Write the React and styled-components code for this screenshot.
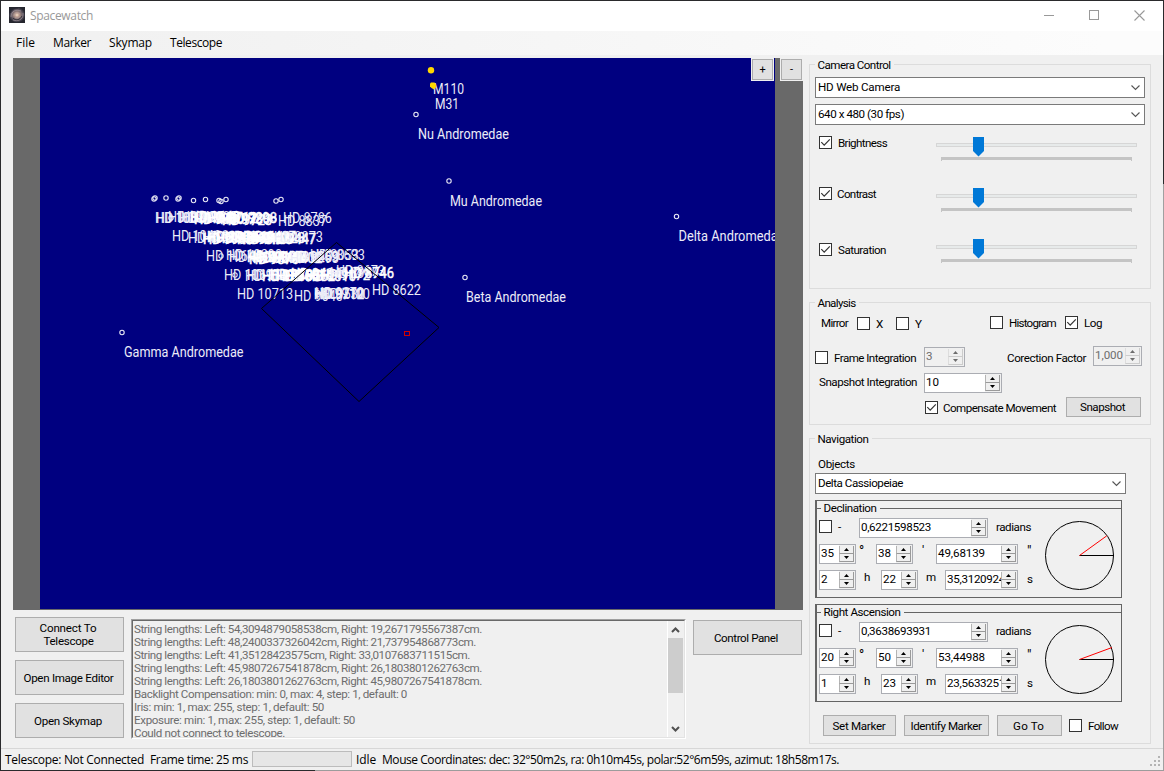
import React from 'react';
import styled, { createGlobalStyle } from 'styled-components';

const SANS = 'Roboto, "Liberation Sans", sans-serif';
const UI = '"Open Sans", "Noto Sans", sans-serif';

const GlobalStyle = createGlobalStyle`
  * { box-sizing: border-box; }
  body { margin: 0; overflow: hidden; background: #f0f0f0; }
`;

/* ---------- text with a set advance width ---------- */
const ctx = document.createElement('canvas').getContext('2d');
function tracking(text, width, font) {
  if (!width) return 0;
  ctx.font = font;
  return (width - ctx.measureText(text).width) / text.length;
}

const TextBox = styled.span`
  display: block;
  flex: none;
  white-space: pre;
  font-family: ${(p) => (p.$ui ? UI : SANS)};
  font-size: ${(p) => p.$size}px;
  line-height: ${(p) => p.$lh || 14}px;
  color: ${(p) => p.$color || '#000'};
  margin: ${(p) => p.$m || '0'};
`;

function Text({ children, w, ui, size = ui ? 12 : 11.6, lh, color, m }) {
  const ls = tracking(children, w, `${size}px ${ui ? UI : SANS}`);
  return (
    <TextBox $ui={ui} $size={size} $lh={lh} $color={color} $m={m} style={{ letterSpacing: `${ls}px` }}>
      {children}
    </TextBox>
  );
}

/* ---------- window chrome ---------- */
const Window = styled.div`
  width: 1164px;
  height: 771px;
  display: flex;
  flex-direction: column;
  border: 1px solid transparent;
  background:
    linear-gradient(#f0f0f0, #f0f0f0) padding-box,
    linear-gradient(90deg, #2a2a2c 315px, #9c9c9c 315px) bottom / 100% 1px no-repeat border-box,
    linear-gradient(#2a2a2c 184px, #a0a0a0 184px) right / 1px 100% no-repeat border-box,
    linear-gradient(#2a2a2c, #2a2a2c) border-box;
`;
const TitleBar = styled.header`
  height: 30px;
  flex: none;
  background: #fff;
  display: flex;
  padding: 6px 0 0 8px;
`;
const Caption = styled.div`
  margin-left: auto;
  margin-right: 18px;
  display: flex;
  gap: 35px;
  padding-top: 3px;
  svg { display: block; }
`;
const MenuBar = styled.nav`
  height: 24px;
  flex: none;
  background: linear-gradient(90deg, #f0f0f0, #fcfcfc 95%);
  display: flex;
  padding: 3px 0 0 15px;
`;
const Main = styled.main`
  flex: 1;
  display: flex;
  min-height: 0;
  padding-left: 12px;
`;
const Left = styled.section`
  width: 790px;
  flex: none;
  display: flex;
  flex-direction: column;
`;
const Right = styled.section`
  margin-left: 6px;
  width: 342px;
  flex: none;
`;

/* ---------- controls ---------- */
const Button = styled.div`
  width: ${(p) => p.$w}px;
  height: ${(p) => p.$h}px;
  flex: none;
  background: #e1e1e1;
  border: 1px solid #adadad;
  display: flex;
  flex-direction: column;
  align-items: center;
  justify-content: center;
  margin: ${(p) => p.$m || '0'};
`;
const Row = styled.div`
  display: flex;
  align-items: flex-start;
  height: ${(p) => p.$h}px;
  padding: ${(p) => p.$p || '0'};
`;
const Group = styled.div`
  width: 342px;
  height: ${(p) => p.$h}px;
  border: 1px solid #dcdcdc;
  margin-top: ${(p) => p.$mt}px;
`;
const Legend = styled.div`
  height: 14px;
  margin: ${(p) => p.$m || '-7px 0 -1px 5px'};
  padding: 0 3px 0 2.5px;
  width: max-content;
  background: #f0f0f0;
`;
const Box = styled.span`
  width: 13px;
  height: 13px;
  flex: none;
  border: 1px solid #333;
  background: #fff;
  margin: ${(p) => p.$m || '0'};
  svg { display: block; }
`;
function Check({ on, m }) {
  return (
    <Box $m={m}>
      {on && (
        <svg width="11" height="11" viewBox="0 0 11 11">
          <path d="M1.3 5.2 L4.2 8.1 L9.8 2.4" fill="none" stroke="#333" strokeWidth="1.2" />
        </svg>
      )}
    </Box>
  );
}

const ComboBox = styled.div`
  width: ${(p) => p.$w}px;
  height: 21px;
  border: 1px solid #7a7a7a;
  background: #fff;
  display: flex;
  justify-content: space-between;
  margin: ${(p) => p.$m};
  padding: 2px 4px 0 2px;
`;
function Combo({ text, tw, w, m }) {
  return (
    <ComboBox $w={w} $m={m}>
      <Text w={tw}>{text}</Text>
      <svg width="9" height="14" viewBox="0 0 9 14">
        <path d="M0.5 5.5 L4.5 9.5 L8.5 5.5" fill="none" stroke="#555" strokeWidth="1.1" />
      </svg>
    </ComboBox>
  );
}

const NumBox = styled.div`
  width: ${(p) => p.$w}px;
  height: 20px;
  flex: none;
  border: 1px solid #abadb3;
  background: ${(p) => (p.$off ? '#f0f0f0' : '#fff')};
  display: flex;
  margin: ${(p) => p.$m || '0'};
`;
const NumValue = styled.div`
  flex: 1;
  min-width: 0;
  overflow: hidden;
  padding: 1px 0 0 1px;
`;
const Spin = styled.div`
  width: 16px;
  flex: none;
  background: #f0f0f0;
  display: flex;
  flex-direction: column;
  padding: 1px 1px 1px 0;
`;
const SpinButton = styled.div`
  height: 8px;
  border: solid ${(p) => (p.$off ? '#ccc' : '#9a9a9a')};
  border-width: 0 1px 1px 1px;
  border-left-color: ${(p) => (p.$off ? '#ddd' : '#b4b4b4')};
  display: flex;
  align-items: center;
  justify-content: center;
`;
function Numeric({ value, tw, w, m, off }) {
  const c = off ? '#6d6d6d' : '#000';
  return (
    <NumBox $w={w} $m={m} $off={off}>
      <NumValue><Text w={tw} color={c}>{value}</Text></NumValue>
      <Spin>
        <SpinButton $off={off}><svg width="5" height="3"><path d="M0 3 L2.5 0 L5 3Z" fill={c} /></svg></SpinButton>
        <SpinButton $off={off}><svg width="5" height="3"><path d="M0 0 L2.5 3 L5 0Z" fill={c} /></svg></SpinButton>
      </Spin>
    </NumBox>
  );
}

const TrackSvg = styled.svg`
  display: block;
  height: 51px;
  width: 201px;
`;
function Slider() {
  return (
    <TrackSvg viewBox="0 0 201 51" shapeRendering="crispEdges">
      <rect x="0.5" y="6.5" width="200" height="3" fill="#e7eaea" stroke="#d6d6d6" />
      <path d="M5 20H196V24H195V23H6V24H5Z" fill="#c4c4c4" />
      <path d="M37 0H48V14L42.5 19.5L37 14Z" fill="#0078d7" shapeRendering="auto" />
    </TrackSvg>
  );
}

/* ---------- sky map ---------- */
const Sky = styled.div`
  height: 552px;
  background: #696969;
  display: flex;
  padding-right: 28px;
  padding-left: 27px;
  position: relative;
`;
const Zooms = styled.div`
  position: absolute;
  top: 0;
  right: 0;
  display: flex;
  gap: 6px;
`;
const ZoomPad = styled.div`
  padding: 1px;
  background: #f0f0f0;
`;

const HD = [
  ['HD 10874', 155, 222, 56], ['HD 10588', 156, 222, 56], ['HD 10425', 168, 221, 56], ['HD 10390', 179, 222, 56],
  ['HD 10205', 181, 221, 56], ['HD 9900', 194, 223, 50], ['HD 9712', 207, 222, 50], ['HD 9640', 190, 221, 50],
  ['HD 9780', 220, 223, 50], ['HD 9723', 222, 224, 50], ['HD 9298', 227, 222, 50],
  ['HD 8837', 278, 225, 49], ['HD 8786', 283, 222, 49],
  ['HD 10486', 172, 240, 56], ['HD 10307', 188, 242, 56], ['HD 10204', 202, 241, 56], ['HD 9996', 203, 243, 50],
  ['HD 9958', 207, 241, 50], ['HD 9746', 216, 242, 50], ['HD 9616', 225, 241, 50], ['HD 9540', 237, 243, 50],
  ['HD 9407', 246, 241, 50], ['HD 9328', 255, 242, 50], ['HD 9150', 242, 243, 50], ['HD 9447', 266, 243, 50], ['HD 9373', 274, 241, 49],
  ['HD 10645', 206, 260, 56], ['HD 10390', 226, 259, 56], ['HD 10280', 229, 261, 56], ['HD 9919', 247, 261, 50],
  ['HD 9870', 249, 263, 50], ['HD 9690', 253, 262, 50], ['HD 9608', 259, 261, 50], ['HD 9259', 289, 261, 50],
  ['HD 9402', 272, 262, 50], ['HD 8993', 290, 262, 49], ['HD 9053', 310, 259, 49], ['HD 8693', 316, 259, 49],
  ['HD 10697', 224, 279, 56], ['HD 10450', 245, 280, 56], ['HD 10175', 247, 279, 56], ['HD 9855', 262, 280, 50],
  ['HD 9780', 270, 279, 50], ['HD 9661', 276, 280, 50], ['HD 9562', 285, 280, 50], ['HD 9484', 291, 278, 50],
  ['HD 9310', 306, 280, 50], ['HD 9172', 320, 279, 50], ['HD 8949', 330, 277, 49], ['HD 8673', 336, 275, 49], ['HD 8746', 344, 277, 50],
  ['HD 10713', 237, 298, 56], ['HD 9640', 294, 300, 49], ['HD 9712', 314, 298, 50], ['HD 9270', 315, 297, 49],
  ['HD 9530', 316, 298, 49], ['HD 9100', 321, 298, 49], ['HD 8622', 372, 294, 49],
];
const NAMED = [
  ['M110', 433, 93, 31], ['M31', 435, 108, 24], ['Nu Andromedae', 418, 138, 91], ['Mu Andromedae', 450, 205, 92],
  ['Delta Andromedae', 678.5, 240.5, 106], ['Beta Andromedae', 466, 301, 100], ['Gamma Andromedae', 124, 356, 119.5],
];
const STARS = [
  [154, 199], [155, 198], [166, 198], [179, 198], [178, 199], [193.5, 200.5], [205.5, 199.5], [219, 200.5], [221, 201.5],
  [226, 199.5], [276, 201], [281, 199.5], [416, 114.5], [449, 181], [676.5, 216.5], [465, 277.5], [122, 332.5],
  [171, 218], [221, 256], [235, 275], [274, 219],
];
const MapSvg = styled.svg`
  display: block;
  background: #000080;
  width: 735px;
  height: 551px;
`;
const MapLabel = styled.text`
  font: 13.8px ${SANS};
  fill: ${(p) => (p.$dense ? '#fff' : '#ececf8')};
  stroke: ${(p) => (p.$dense ? '#fff' : 'none')};
  stroke-width: 0.5px;
`;
function SkyMap() {
  const label = ([t, x, y, w], i) => (
    <MapLabel key={i} x={x} y={Math.floor(y) + 0.6} $dense={w === 50} textLength={w} lengthAdjust="spacingAndGlyphs">{t}</MapLabel>
  );
  return (
    <MapSvg viewBox="40 58 735 551">
      {STARS.map(([x, y], i) => (
        <circle key={i} cx={x} cy={y} r="2.2" fill="none" stroke="#e8e8f4" strokeWidth="1.1" />
      ))}
      {HD.map(label)}
      {NAMED.map(label)}
      <circle cx="431" cy="70.3" r="3.2" fill="#ffd700" />
      <path d="M431 82.5 L434.5 82.5 L436 84.5 L436 87 L434 89.5 L431.5 88 L430 86.5 L430 83.5Z" fill="#ffd700" />
      <path d="M336.5 242.5 L439 327.5 L359 401.5 L261.5 308.5Z" fill="none" stroke="#000" />
      <rect x="404.5" y="331.5" width="5" height="4" fill="none" stroke="#d00000" />
    </MapSvg>
  );
}

/* ---------- lower left ---------- */
const Lower = styled.div`
  display: flex;
  padding: 7px 0 0 2px;
`;
const Stack = styled.div`
  display: flex;
  flex-direction: column;
  gap: 8px;
`;
const Log = styled.div`
  margin: 2px 0 0 7px;
  width: 555px;
  height: 120px;
  flex: none;
  border: 1px solid #a0a0a0;
  border-right-color: #fff;
  border-bottom-color: #fff;
`;
const LogInner = styled.div`
  height: 118px;
  border: 1px solid #696969;
  border-right-color: #e3e3e3;
  border-bottom-color: #e3e3e3;
  display: flex;
  overflow: hidden;
`;
const LogLines = styled.div`
  flex: 1;
  padding: 2px 0 0 1px;
`;
const ScrollBar = styled.div`
  width: 17px;
  border-left: 1px solid #fff;
  display: flex;
  flex-direction: column;
  svg { display: block; margin-left: 3px; }
`;
const Thumb = styled.div`
  width: 15px;
  height: 55px;
  background: #cdcdcd;
  margin-bottom: 27px;
`;
const LOG = [
  ['String lengths: Left: 54,3094879058538cm, Right: 19,2671795567387cm.', 348],
  ['String lengths: Left: 48,2400337326042cm, Right: 21,737954868773cm.', 342],
  ['String lengths: Left: 41,35128423575cm, Right: 33,0107683711515cm.', 336],
  ['String lengths: Left: 45,9807267541878cm, Right: 26,1803801262763cm.', 348],
  ['String lengths: Left: 26,1803801262763cm, Right: 45,9807267541878cm.', 348],
  ['Backlight Compensation: min: 0, max: 4, step: 1, default: 0', 273],
  ['Iris: min: 1, max: 255, step: 1, default: 50', 190],
  ['Exposure: min: 1, max: 255, step: 1, default: 50', 221],
  ['Could not connect to telescope.', 151],
];

/* ---------- coordinate panels ---------- */
const Panel = styled.div`
  width: 307px;
  height: 98px;
  border: 1px solid #646464;
  border-left-width: 2px;
  margin: ${(p) => p.$m};
  padding-top: 7px;
`;
const PanelBody = styled.div`
  border-top: 1px solid #646464;
  height: 89px;
`;
const PanelColumns = styled.div`
  display: flex;
`;
const Fields = styled.div`
  width: 228px;
  flex: none;
  padding: 3px 0 0 2px;
`;
const Unit = styled.div`
  width: ${(p) => p.$w}px;
  flex: none;
  padding-left: ${(p) => p.$pl}px;
`;
const Dial = styled.svg`
  display: block;
  margin-top: 6px;
  width: 70px;
  height: 70px;
`;
function AnglePanel({ title, titleW, rad, radW, deg, min, sec, h, m, s, end, mg }) {
  return (
    <Panel $m={mg}>
      <PanelBody>
        <Legend $m="-8px 0 0 4px"><Text w={titleW}>{title}</Text></Legend>
        <PanelColumns>
          <Fields>
            <Row $h={26}>
              <Check m="2px 6px 0 0" />
              <Text m="2px 0 0 0">-</Text>
              <Numeric value={rad} tw={radW} w={129} m="0 8px 0 auto" />
              <Text w={35} m="2px 14px 0 0">radians</Text>
            </Row>
            <Row $h={26}>
              <Numeric value={deg} tw={13} w={37} />
              <Unit $w={20} $pl={3}><Text size={14}>°</Text></Unit>
              <Numeric value={min} tw={13} w={37} />
              <Unit $w={23} $pl={9}><Text size={13}>'</Text></Unit>
              <Numeric value={sec} tw={47} w={82} />
              <Unit $w={20} $pl={9}><Text w={7} size={14}>"</Text></Unit>
            </Row>
            <Row $h={26}>
              <Numeric value={h} w={37} />
              <Text m="0 0 0 8px" w={7}>h</Text>
              <Numeric value={m} tw={13} w={37} m="0 0 0 10px" />
              <Text m="0 0 0 8px" w={9}>m</Text>
              <Numeric value={s} tw={58} w={73} m="0 0 0 10px" />
              <Text m="2px 0 0 9px" w={6}>s</Text>
            </Row>
          </Fields>
          <Dial viewBox="0 0 70 70">
            <circle cx="34.5" cy="34.5" r="34" fill="none" stroke="#000" />
            <path d="M34.5 34.5H69" stroke="#000" />
            <path d={`M34.5 34.5L${end}`} stroke="#f00" />
          </Dial>
        </PanelColumns>
      </PanelBody>
    </Panel>
  );
}

/* ---------- status bar ---------- */
const StatusBar = styled.footer`
  height: 22px;
  flex: none;
  border-top: 1px solid #d7d7d7;
  display: flex;
  padding: 2px 0 0 4px;
`;
const Progress = styled.div`
  width: 100px;
  height: 16px;
  border: 1px solid #bcbcbc;
  background: #e6e6e6;
  margin: 0 4px 0 4px;
`;
const Grip = styled.svg`
  display: block;
  margin: 5px 1px 0 auto;
`;
const ControlColumns = styled.div`
  display: flex;
  padding: 11px 0 0 9px;
`;
const CheckColumn = styled.div`
  width: 117px;
`;
const SliderColumn = styled.div`
  padding-top: 1px;
`;

export default function App() {
  return (
    <>
      <GlobalStyle />
      <Window>
        <TitleBar>
          <svg width="16" height="16" viewBox="0 0 16 16">
            <defs>
              <radialGradient id="galaxy">
                <stop offset="0" stopColor="#f4e0cc" />
                <stop offset="0.28" stopColor="#b8988a" />
                <stop offset="0.65" stopColor="#6a6068" />
                <stop offset="1" stopColor="#2c2c38" />
              </radialGradient>
            </defs>
            <rect width="16" height="16" fill="#25262e" />
            <ellipse cx="8" cy="8" rx="8" ry="7.5" fill="url(#galaxy)" />
            <path d="M2 10C2 4 7 2 12 4M14 6C15 12 9 15 4 13M5 9C5 5 9 5 11 7M11 9C10 12 7 11 6 10" fill="none" stroke="#b9aab0" strokeWidth="0.7" opacity="0.7" />
            <path d="M1 6C3 2 6 1 9 1M4 11C7 14 11 13 13 9" fill="none" stroke="#1c1d26" strokeWidth="1" opacity="0.7" />
          </svg>
          <Text ui w={63} lh={17} color="#999" m="0 0 0 5px">Spacewatch</Text>
          <Caption>
            <svg width="10" height="11"><path d="M0 5.5H10" stroke="#999" /></svg>
            <svg width="10" height="11"><rect x="0.5" y="0.5" width="9" height="9" fill="none" stroke="#999" /></svg>
            <svg width="11" height="11"><path d="M0.5 0.5L10.5 10.5M10.5 0.5L0.5 10.5" stroke="#999" strokeWidth="1.1" /></svg>
          </Caption>
        </TitleBar>
        <MenuBar>
          <Text ui w={19} lh={17}>File</Text>
          <Text ui w={38} lh={17} m="0 0 0 18px">Marker</Text>
          <Text ui w={43} lh={17} m="0 0 0 18px">Skymap</Text>
          <Text ui w={52} lh={17} m="0 0 0 18px">Telescope</Text>
        </MenuBar>
        <Main>
          <Left>
            <Row $h={555} $p="3px 0 0 0">
              <Sky>
                <SkyMap />
                <Zooms>
                  <ZoomPad><Button $w={21} $h={21}><Text size={11}>+</Text></Button></ZoomPad>
                  <ZoomPad><Button $w={21} $h={21}><Text size={11}>-</Text></Button></ZoomPad>
                </Zooms>
              </Sky>
            </Row>
            <Lower>
              <Stack>
                <Button $w={109} $h={35}>
                  <Text w={57} lh={13} m="0 3px 0 0">Connect To</Text>
                  <Text w={50} lh={13} m="0 2px 0 0">Telescope</Text>
                </Button>
                <Button $w={109} $h={35}><Text w={90} m="0 2px 0 0">Open Image Editor</Text></Button>
                <Button $w={109} $h={35}><Text w={68} m="0 3px 0 0">Open Skymap</Text></Button>
              </Stack>
              <Log>
                <LogInner>
                  <LogLines>
                    {LOG.map(([t, w]) => <Text key={t} w={w} lh={13} color="#6d6d6d">{t}</Text>)}
                  </LogLines>
                  <ScrollBar>
                    <svg width="9" height="17"><path d="M1 11L4.5 7.5L8 11" fill="none" stroke="#505050" strokeWidth="2" /></svg>
                    <Thumb />
                    <svg width="9" height="17"><path d="M1 7L4.5 10.5L8 7" fill="none" stroke="#505050" strokeWidth="2" /></svg>
                  </ScrollBar>
                </LogInner>
              </Log>
              <Button $w={109} $h={35} $m="3px 0 0 7px"><Text w={64} m="0 3px 0 0">Control Panel</Text></Button>
            </Lower>
          </Left>
          <Right>
            <Group $h={225} $mt={9}>
              <Legend><Text w={73}>Camera Control</Text></Legend>
              <Combo text="HD Web Camera" tw={82} w={330} m="6px 0 0 5px" />
              <Combo text="640 x 480 (30 fps)" tw={86} w={330} m="6px 0 0 5px" />
              <ControlColumns>
                <CheckColumn>
                  <Row $h={51}><Check on m="0 6px 0 0" /><Text w={49}>Brightness</Text></Row>
                  <Row $h={56}><Check on m="0 5px 0 0" /><Text w={39}>Contrast</Text></Row>
                  <Row $h={16}><Check on m="0 6px 0 0" /><Text w={48}>Saturation</Text></Row>
                </CheckColumn>
                <SliderColumn>
                  <Slider />
                  <Slider />
                  <Slider />
                </SliderColumn>
              </ControlColumns>
            </Group>
            <Group $h={123} $mt={13}>
              <Legend><Text w={38}>Analysis</Text></Legend>
              <Row $h={37} $p="6px 0 0 11px">
                <Text w={27} m="1px 9px 0 0">Mirror</Text>
                <Check m="2px 6px 0 0" />
                <Text w={8} m="2px 12px 0 0">X</Text>
                <Check m="2px 6px 0 0" />
                <Text w={8} m="2px 67px 0 0">Y</Text>
                <Check m="1px 6px 0 0" />
                <Text w={47} m="1px 9px 0 0">Histogram</Text>
                <Check on m="1px 6px 0 0" />
                <Text w={18} m="1px 0 0 0">Log</Text>
              </Row>
              <Row $h={27} $p="0 0 0 5px">
                <Check m="5px 6px 0 0" />
                <Text w={82} m="5px 8px 0 0">Frame Integration</Text>
                <Numeric off value="3" w={41} m="1px 42px 0 0" />
                <Text w={79} m="5px 7px 0 0">Corection Factor</Text>
                <Numeric off value="1,000" tw={28} w={49} />
              </Row>
              <Row $h={24} $p="0 0 0 9px">
                <Text w={98} m="2px 7px 0 0">Snapshot Integration</Text>
                <Numeric value="10" tw={13} w={78} />
              </Row>
              <Row $h={22} $p="0 0 0 115px">
                <Check on m="4px 5px 0 0" />
                <Text w={113} m="4px 10px 0 0">Compensate Movement</Text>
                <Button $w={75} $h={20}><Text w={45} m="0 2px 0 0">Snapshot</Text></Button>
              </Row>
            </Group>
            <Group $h={306} $mt={13}>
              <Legend><Text w={51}>Navigation</Text></Legend>
              <Text w={37} m="12px 0 0 8px">Objects</Text>
              <Combo text="Delta Cassiopeiae" tw={85} w={311} m="2px 0 0 5px" />
              <AnglePanel
                mg="6px 0 0 5px" title="Declination" titleW={53} rad="0,6221598523" radW={70}
                deg="35" min="38" sec="49,68139" h="2" m="22" s="35,3120924" end="61.8 14.8"
              />
              <AnglePanel
                mg="6px 0 0 5px" title="Right Ascension" titleW={77} rad="0,3638693931" radW={70}
                deg="20" min="50" sec="53,44988" h="1" m="23" s="23,5633251" end="67 22.5"
              />
              <Row $h={22} $p="13px 0 0 13px">
                <Button $w={73} $h={21} $m="0 8px 0 0"><Text w={53} m="0 1px 0 0">Set Marker</Text></Button>
                <Button $w={85} $h={21} $m="0 8px 0 0"><Text w={71} m="0 1px 0 0">Identify Marker</Text></Button>
                <Button $w={65} $h={21} $m="0 7px 0 0"><Text w={31} m="0 2px 0 0">Go To</Text></Button>
                <Check m="4px 6px 0 0" />
                <Text w={30} m="4px 0 0 0">Follow</Text>
              </Row>
            </Group>
          </Right>
        </Main>
        <StatusBar>
          <Text ui w={139} lh={17}>Telescope: Not Connected</Text>
          <Text ui w={98} lh={17} m="0 0 0 6px">Frame time: 25 ms</Text>
          <Progress />
          <Text ui w={20} lh={17}>Idle</Text>
          <Text ui w={457} lh={17} m="0 0 0 6px">Mouse Coordinates: dec: 32°50m2s, ra: 0h10m45s, polar:52°6m59s, azimut: 18h58m17s.</Text>
          <Grip width="12" height="12">
            <path d="M8 0h2v2h-2zM4 4h2v2h-2zM8 4h2v2h-2zM0 8h2v2h-2zM4 8h2v2h-2zM8 8h2v2h-2z" fill="#b4b4b4" />
          </Grip>
        </StatusBar>
      </Window>
    </>
  );
}
